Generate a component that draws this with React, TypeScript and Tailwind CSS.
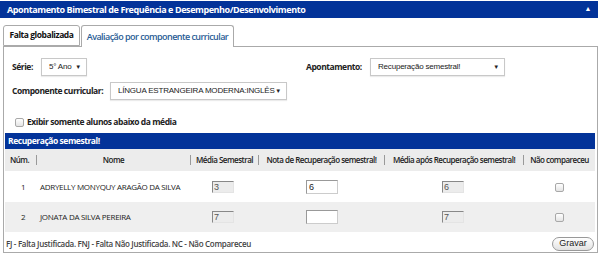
import React from "react";

const arial = { fontFamily: '"Liberation Sans", Arial, sans-serif' };

const Sel = ({ w, text }: { w: string; text: string }) => (
  <div
    className={`${w} h-[18px] border border-[#c8c8c8] bg-white flex items-center justify-between pl-[7px] pr-[5px] text-[8px] tracking-[-0.2px] text-[#222] whitespace-nowrap shadow-[0_1px_1px_rgba(0,0,0,0.08)]`}
    style={arial}
  >
    <span>{text}</span>
    <span className="text-[6px]">▼</span>
  </div>
);

const ReadOnly = ({ v }: { v: string }) => (
  <div
    className="w-[22px] h-[12px] bg-[#ececec] border-t border-l border-t-[#888] border-l-[#888] border-r border-b border-r-[#e4e4e4] border-b-[#e4e4e4] text-[9px] leading-[11px] pl-[1px] text-[#555]"
    style={arial}
  >
    {v}
  </div>
);

const Input = ({ v }: { v: string }) => (
  <div
    className="w-[32px] h-[14px] bg-white border border-[#999] border-b-[#ccc] border-r-[#ccc] text-[9px] leading-[12px] pl-[2px] text-[#222]"
    style={arial}
  >
    {v}
  </div>
);

const Check = () => (
  <div className="w-[9px] h-[9px] rounded-[2px] border border-[#a8a8a8] bg-gradient-to-b from-white to-[#e4e4e4]" />
);

const Sep = () => <span className="w-px h-[10px] bg-[#999] shrink-0" />;

const lbl = "text-[8.5px] font-bold tracking-[-0.45px] whitespace-nowrap";

export default function App() {
  return (
    <div
      className="w-[600px] h-[258px] bg-white text-[#222]"
      style={{ fontFamily: '"Open Sans", "Noto Sans", sans-serif' }}
    >
      <div className="w-[598px] pt-[1px]">
        <div className="h-[17px] bg-[#033399] flex items-center justify-between pl-[7px] pr-[7px] text-white text-[9px] font-bold tracking-[-0.42px] whitespace-nowrap">
          <span>Apontamento Bimestral de Frequência e Desempenho/Desenvolvimento</span>
          <span className="text-[7px]">▲</span>
        </div>

        <div className="mt-[7px] pl-[3px] flex items-end h-[21px] relative z-10">
          <div className={`h-[21px] w-[77px] border border-[#aaa] rounded-t-[3px] bg-white flex items-center justify-center text-[#111] ${lbl}`}>
            Falta globalizada
          </div>
          <div className="h-[22px] -mb-px w-[153px] ml-[1px] border border-b-0 border-[#aaa] rounded-t-[3px] bg-white flex items-center justify-center text-[9px] font-semibold tracking-[-0.55px] text-[#2a5d95] whitespace-nowrap">
            Avaliação por componente curricular
          </div>
        </div>

        <div className="ml-[3px] border border-[#aaa] h-[207px] flex flex-col">
          <div className="flex items-center h-[18px] mt-[11px]">
            <span className={`ml-[8px] w-[29px] ${lbl}`}>Série:</span>
            <Sel w="w-[46px]" text="5° Ano" />
            <span className={`ml-[219px] w-[64px] ${lbl}`}>Apontamento:</span>
            <Sel w="w-[135px]" text="Recuperação semestral!" />
          </div>
          <div className="flex items-center h-[18px] mt-[6px]">
            <span className={`ml-[8px] w-[98px] ${lbl}`}>Componente curricular:</span>
            <Sel w="w-[177px]" text="LÍNGUA ESTRANGEIRA MODERNA:INGLÊS" />
          </div>
          <div className="flex items-center h-[12px] mt-[16px] ml-[11px] gap-[3px]">
            <Check />
            <span className={lbl}>Exibir somente alunos abaixo da média</span>
          </div>

          <div className={`mt-[5px] ml-[1px] mr-[2px] h-[16px] bg-[#033399] flex items-center pl-[3px] text-white ${lbl}`}>
            Recuperação semestral!
          </div>
          <div className="ml-[1px] mr-[2px] h-[22px] bg-[#ececec] flex items-center text-[8px] font-semibold tracking-[-0.5px] text-[#222] whitespace-nowrap">
            <span className="w-[31px] pl-[5px]">Núm.</span>
            <Sep />
            <span className="w-[153px] text-center">Nome</span>
            <Sep />
            <span className="w-[67px] text-center">Média Semestral</span>
            <Sep />
            <span className="w-[125px] text-center">Nota de Recuperação semestral!</span>
            <Sep />
            <span className="w-[138px] text-center">Média após Recuperação semestral!</span>
            <Sep />
            <span className="flex-1 text-center">Não compareceu</span>
          </div>

          {[
            { n: "1", name: "ADRYELLY MONYQUY ARAGÃO DA SILVA", m: "3", nota: "6", ap: "6", bg: "bg-white" },
            { n: "2", name: "JONATA DA SILVA PEREIRA", m: "7", nota: "", ap: "7", bg: "bg-[#efefef]" },
          ].map((r) => (
            <div
              key={r.n}
              className={`ml-[1px] mr-[2px] h-[30px] ${r.bg} flex items-center text-[8px] tracking-[-0.3px] text-[#222] whitespace-nowrap ${r.n === "1" ? "mt-[1px]" : ""}`}
            >
              <span className="w-[35px] pl-[16px]">{r.n}</span>
              <span className="w-[172px]">{r.name}</span>
              <span className="w-[94px]"><ReadOnly v={r.m} /></span>
              <span className="w-[136px]"><Input v={r.nota} /></span>
              <span className="w-[113px]"><ReadOnly v={r.ap} /></span>
              <span><Check /></span>
            </div>
          ))}

          <div className="flex items-center justify-between ml-[2px] mr-[3px] mt-[5px] h-[14px]">
            <span className="text-[8px] font-semibold tracking-[-0.3px] text-[#444] whitespace-nowrap">
              FJ - Falta Justificada. FNJ - Falta Não Justificada. NC - Não Compareceu
            </span>
            <div
              className="h-[14px] w-[42px] rounded-full border border-[#999] bg-gradient-to-b from-white to-[#e2e2e2] flex items-center justify-center text-[9px] text-[#222]"
              style={arial}
            >
              Gravar
            </div>
          </div>
        </div>
      </div>
    </div>
  );
}
